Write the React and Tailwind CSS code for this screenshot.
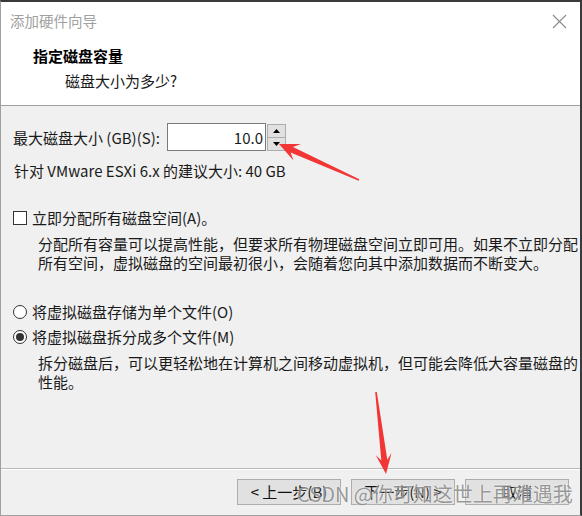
import React from "react";

const font = { fontFamily: '"Noto Sans CJK SC", "Noto Sans", sans-serif' };

function Btn({ children }) {
  return (
    <div className="w-[104px] h-[26px] bg-[#e1e1e1] border border-[#adadad] flex items-center justify-center text-[15px] leading-[20px] text-[#111]">
      {children}
    </div>
  );
}

export default function App() {
  return (
    <div
      className="relative w-[582px] h-[516px] bg-[#f0f0f0] overflow-hidden flex flex-col border-t-2 border-t-[#3a3a3a] border-r-2 border-r-[#3a3a3a] border-l border-l-[#a0a0a0] border-b border-b-[#a0a0a0] text-[#1a1a1a]"
      style={font}
    >
      {/* Header */}
      <div className="h-[104px] bg-white border-b border-[#a0a0a0] flex flex-col shrink-0">
        <div className="h-[38px] flex items-center justify-between pl-[9px] pr-[13px]">
          <span className="text-[14.5px] leading-[20px] text-[#a0a0a0]">添加硬件向导</span>
          <svg width="15" height="15" viewBox="0 0 15 15">
            <path d="M1 1 L14 14 M14 1 L1 14" stroke="#8a8a8a" strokeWidth="1.1" fill="none" />
          </svg>
        </div>
        <div className="pl-[32px] mt-[6px] text-[15px] leading-[20px] font-bold text-black">指定磁盘容量</div>
        <div className="pl-[64px] mt-[5px] text-[15px] leading-[20px] text-[#1a1a1a]">磁盘大小为多少?</div>
      </div>

      {/* Body */}
      <div className="flex-1 flex flex-col pl-[12px] text-[15px] leading-[19px]">
        <div className="mt-[17px] flex items-center h-[28px]">
          <span className="w-[154px]">最大磁盘大小 (GB)(S):</span>
          <div className="w-[99px] h-[28px] bg-white border border-[#7a7a7a] flex items-center justify-end pr-[2px]">
            10.0
          </div>
          <div className="flex flex-col ml-[1px] h-[27px] w-[19px]">
            <div className="flex-1 bg-[#e1e1e1] border border-[#adadad] flex items-center justify-center">
              <svg width="7" height="4" viewBox="0 0 7 4"><path d="M0 4 L3.5 0 L7 4 Z" fill="#000" /></svg>
            </div>
            <div className="flex-1 bg-[#e1e1e1] border border-t-0 border-[#adadad] flex items-center justify-center">
              <svg width="7" height="4" viewBox="0 0 7 4"><path d="M0 0 L3.5 4 L7 0 Z" fill="#000" /></svg>
            </div>
          </div>
        </div>
        <div className="mt-[10px] pl-[1px]">针对 VMware ESXi 6.x 的建议大小: 40 GB</div>

        <div className="mt-[28px] flex items-center">
          <div className="w-[14px] h-[14px] bg-white border border-[#333]" />
          <span className="ml-[5px]">立即分配所有磁盘空间(A)。</span>
        </div>
        <div className="mt-[7px] pl-[25px]">
          <div className="whitespace-nowrap">分配所有容量可以提高性能，但要求所有物理磁盘空间立即可用。如果不立即分配</div>
          <div className="whitespace-nowrap">所有空间，虚拟磁盘的空间最初很小，会随着您向其中添加数据而不断变大。</div>
        </div>

        <div className="mt-[30px] flex items-center">
          <div className="w-[14px] h-[14px] rounded-full bg-white border border-[#333]" />
          <span className="ml-[5px]">将虚拟磁盘存储为单个文件(O)</span>
        </div>
        <div className="mt-[6px] flex items-center">
          <div className="w-[14px] h-[14px] rounded-full bg-white border border-[#333] flex items-center justify-center">
            <div className="w-[8px] h-[8px] rounded-full bg-[#333]" />
          </div>
          <span className="ml-[5px]">将虚拟磁盘拆分成多个文件(M)</span>
        </div>
        <div className="mt-[7px] pl-[25px]">
          <div className="whitespace-nowrap">拆分磁盘后，可以更轻松地在计算机之间移动虚拟机，但可能会降低大容量磁盘的</div>
          <div className="whitespace-nowrap">性能。</div>
        </div>
      </div>

      {/* Footer */}
      <div className="h-[47px] shrink-0 border-t border-[#b9b9b9] shadow-[inset_0_1px_0_#ffffff] flex items-start justify-end gap-[10px] pt-[10px] pr-[11px]">
        <Btn>&lt; 上一步(B)</Btn>
        <Btn>下一步(N) &gt;</Btn>
        <Btn>取消</Btn>
      </div>

      {/* Watermark */}
      <div className="absolute left-[296px] top-[479px] text-[20px] leading-[26px] text-[#6e6e6e]/70 whitespace-nowrap pointer-events-none [text-shadow:0_0_2px_#ffffff]">
        CSDN @你可知这世上再难遇我
      </div>

      {/* Annotation arrows */}
      <svg className="absolute left-0 top-0 pointer-events-none" width="582" height="516" viewBox="0 0 582 516">
        <polygon
          points="358.3,177.3 292,145 299.9,142 278,142 292.5,158.4 289.6,150.4 357.7,178.7"
          fill="#f23535"
        />
        <polygon
          points="374.2,390.1 380.3,458.5 374.7,453.1 385,472 390.5,451.1 386.3,457.7 375.8,389.9"
          fill="#f23535"
        />
      </svg>
    </div>
  );
}
